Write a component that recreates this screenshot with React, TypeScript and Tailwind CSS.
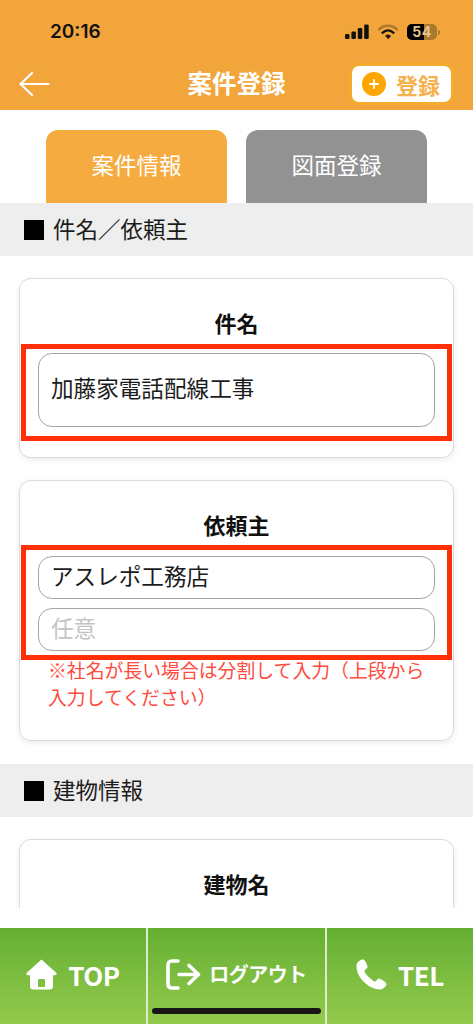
const jp = "font-['Noto_Sans_CJK_JP','Noto_Sans',sans-serif]";

const Card = ({ label, children, className = "" }: { label: string; children?: React.ReactNode; className?: string }) => (
  <div className={`mx-[19px] rounded-[12px] border border-[#dcdcdc] bg-white shadow-[0_2px_6px_rgba(0,0,0,0.08)] ${className}`}>
    <p className="pt-[28px] text-center text-[22px] leading-[30px] font-bold text-[#111]">{label}</p>
    {children}
  </div>
);

const Field = ({ value, placeholder, className = "" }: { value?: string; placeholder?: string; className?: string }) => (
  <div className={`mx-[18px] flex items-center rounded-[14px] border border-[#a3a3a3] bg-white px-[12px] pb-[3px] text-[22.6px] leading-none ${value ? "text-[#1c1c1c]" : "text-[#c4c4c4]"} ${className}`}>
    {value ?? placeholder}
  </div>
);

const SectionBar = ({ title }: { title: string }) => (
  <div className="flex h-[53px] items-center bg-[#eeeeee] pl-[24px] text-[22.5px] text-[#1c1c1c]">
    <span className="mr-[9px] h-[20px] w-[20px] bg-black" />
    <span className="-translate-y-[1px]">{title}</span>
  </div>
);

const RedFrame = ({ top, height }: { top: number; height: number }) => (
  <div className="absolute left-[21px] right-[21px] border-[5px] border-[#ff3008]" style={{ top, height }} />
);

const StatusBar = () => (
  <div className="flex h-[62px] items-center justify-between pt-[20px] pr-[33px] pb-[18px] pl-[50px]">
    <span className="font-['Inter',sans-serif] text-[19px] leading-[24px] font-semibold text-[#111]">20:16</span>
    <div className="flex items-center gap-[9px]">
      <svg width="24" height="16" viewBox="0 0 24 16" fill="#111">
        <rect x="0" y="10" width="4.5" height="5" rx="1.2" />
        <rect x="6.4" y="7.5" width="4.5" height="7.5" rx="1.2" />
        <rect x="12.8" y="4" width="4.5" height="11" rx="1.2" />
        <rect x="19.2" y="0.5" width="4.5" height="14.5" rx="1.2" />
      </svg>
      <svg width="20" height="16" viewBox="0 0 20 16" fill="none" strokeLinecap="round">
        <path d="M1 5.5 C6 0.5 14 0.5 19 5.5" stroke="#a8792f" strokeWidth="2.4" />
        <path d="M4.5 8.8 C7.8 5.8 12.2 5.8 15.5 8.8" stroke="#111" strokeWidth="2.4" />
        <path d="M10 14.5 L7.6 11.8 C9 10.7 11 10.7 12.4 11.8 Z" fill="#111" stroke="#111" strokeWidth="0.8" />
      </svg>
      <div className="flex items-center gap-[1px]">
        <div className="relative flex h-[16px] w-[30px] overflow-hidden rounded-[5px] bg-[#a8792f]">
          <div className="h-full w-[17px] bg-black" />
          <span className="absolute inset-0 flex items-center justify-center font-['Inter',sans-serif] text-[14px] leading-none font-bold tracking-[0.5px] text-[#e8c48c]">54</span>
        </div>
        <div className="h-[5px] w-[2px] rounded-r-full bg-[#a8792f]" />
      </div>
    </div>
  </div>
);

const Header = () => (
  <header className="shrink-0 bg-[#f2a53a]">
    <StatusBar />
    <div className="relative flex h-[48px] items-center justify-center pb-[5px]">
      <svg className="absolute left-[19px] top-[9px]" width="31" height="26" viewBox="0 0 31 26" fill="none" stroke="white" strokeWidth="2.2" strokeLinecap="round" strokeLinejoin="round">
        <path d="M1.5 13 H29.5 M13 2 L1.5 13 L13 24" />
      </svg>
      <h1 className="text-[24.5px] leading-none font-bold text-white">案件登録</h1>
      <button className="absolute right-[22px] top-[4px] flex h-[36px] w-[99px] items-center rounded-[7px] bg-white pl-[10px] shadow-[0_0_0_3px_#f5ab2e]">
        <span className="flex h-[24px] w-[24px] items-center justify-center rounded-full bg-[#ffa500]">
          <svg width="12" height="12" viewBox="0 0 12 12" stroke="white" strokeWidth="1.8" strokeLinecap="round">
            <path d="M6 2 V10 M2 6 H10" />
          </svg>
        </span>
        <span className="ml-[10px] text-[22px] leading-none font-bold text-[#f5b14c]">登録</span>
      </button>
    </div>
  </header>
);

const Tabs = () => (
  <div className="flex h-[93px] items-end gap-[19px] bg-white pl-[46px]">
    <div className="flex h-[73px] w-[181px] justify-center rounded-t-[12px] bg-[#f5ab3f] pt-[19px] text-[22.5px] leading-[30px] text-white">案件情報</div>
    <div className="flex h-[73px] w-[181px] justify-center rounded-t-[12px] bg-[#929292] pt-[19px] text-[22.5px] leading-[30px] text-white">図面登録</div>
  </div>
);

const FooterItem = ({ icon, label, className = "" }: { icon: React.ReactNode; label: string; className?: string }) => (
  <div className={`flex h-full items-center justify-center pb-[4px] ${className}`}>
    {icon}
    {label}
  </div>
);

const Footer = () => (
  <footer className="relative flex h-[96px] shrink-0 bg-gradient-to-b from-[#64af33] to-[#93ca4c] font-bold text-white">
    <FooterItem
      className="w-[148px] border-r-2 border-[#dcebcb] text-[26px] tracking-[-0.5px]"
      label="TOP"
      icon={
        <svg className="mr-[11px]" width="31" height="31" viewBox="0 0 31 31" fill="white">
          <path fillRule="evenodd" d="M15.5 0.5 L30.5 14 C31 15.2 30.3 16.3 29 16.3 H27 V27.5 C27 29.5 25.8 30.5 24 30.5 H7 C5.2 30.5 4 29.5 4 27.5 V16.3 H2 C0.7 16.3 0 15.2 0.5 14 Z M12 21.5 V28 H19 V21.5 C19 20.5 18.3 20 17.5 20 H13.5 C12.7 20 12 20.5 12 21.5 Z" />
        </svg>
      }
    />
    <FooterItem
      className="w-[179px] border-r-2 border-[#dcebcb] text-[20px] tracking-[-0.5px]"
      label="ログアウト"
      icon={
        <svg className="mr-[8px]" width="35" height="31" viewBox="0 0 35 31" fill="none" stroke="white" strokeWidth="3.6" strokeLinecap="round" strokeLinejoin="round">
          <path d="M12 2 H6 C3.5 2 2 3.5 2 6 V25 C2 27.5 3.5 29 6 29 H12" />
          <path d="M13 15.5 H32 M23 6.5 L32.5 15.5 L23 24.5" />
        </svg>
      }
    />
    <FooterItem
      className="flex-1 text-[26px] tracking-[-0.5px]"
      label="TEL"
      icon={
        <svg className="mr-[11px]" width="31" height="31" viewBox="0 0 31 31" fill="white">
          <path d="M7 0.5 C5 0.5 1 2.5 0.5 6 C0 12 3.5 19 9 24 C14 28.5 20 31 24.5 30.5 C27.5 30 30.5 27 30.5 25 C30.5 23.5 24.5 19.5 23 19.5 C21 19.5 20.5 22.5 19 22.5 C17 22.5 8.5 14.5 8.5 12 C8.5 10.5 11.5 10 11.5 8 C11.5 6 9 0.5 7 0.5 Z" />
        </svg>
      }
    />
    <div className="absolute bottom-[10px] left-[152px] h-[6px] w-[169px] rounded-full bg-[#161616]" />
  </footer>
);

export default function App() {
  return (
    <div className={`flex h-[1024px] w-[473px] flex-col overflow-hidden bg-white ${jp}`}>
      <Header />
      <main className="h-[798px] shrink-0 overflow-hidden">
        <Tabs />
        <SectionBar title="件名／依頼主" />

        <div className="relative mt-[22px]">
          <Card label="件名" className="h-[180px]">
            <Field value="加藤家電話配線工事" className="mt-[16px] h-[74px]" />
          </Card>
          <RedFrame top={66} height={97} />
        </div>

        <div className="relative mt-[22px]">
          <Card label="依頼主" className="h-[261px]">
            <Field value="アスレポ工務店" className="mt-[17px] h-[43px]" />
            <Field placeholder="任意" className="mt-[9px] h-[43px]" />
            <p className="mt-[6px] px-[28px] text-[18.85px] leading-[26.5px] text-[#ff4b3e]">
              ※社名が長い場合は分割して入力（上段から入力してください）
            </p>
          </Card>
          <RedFrame top={65} height={115} />
        </div>

        <div className="mt-[23px]">
          <SectionBar title="建物情報" />
        </div>

        <div className="mt-[22px]">
          <Card label="建物名" className="h-[180px]" />
        </div>
      </main>
      <div className="h-[20px] shrink-0 bg-white" />
      <Footer />
    </div>
  );
}
